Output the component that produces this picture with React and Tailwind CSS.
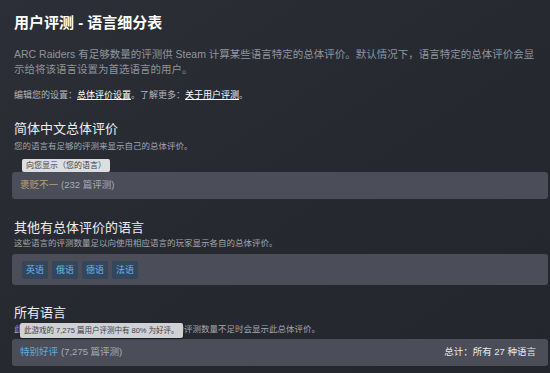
export default function App() {
  const font = { fontFamily: '"Liberation Sans", "Noto Sans CJK SC", sans-serif' };
  return (
    <div
      className="w-[550px] h-[373px] overflow-hidden bg-gradient-to-br from-[#2c2f37] via-[#262930] to-[#23262d] pl-[12px] pr-[2px] pt-[13px]"
      style={font}
    >
      <div className="pl-[2px] text-[15px] leading-[20px] font-bold text-white">用户评测 - 语言细分表</div>

      <p className="pl-[2px] mt-[14px] text-[10.5px] leading-[15px] text-[#8f959d] whitespace-nowrap">
        ARC Raiders 有足够数量的评测供 Steam 计算某些语言特定的总体评价。默认情况下，语言特定的总体评价会显
        <br />
        示给将该语言设置为首选语言的用户。
      </p>

      <div className="pl-[2px] mt-[12px] text-[9px] leading-[12px] text-[#b3b7bd] whitespace-nowrap">
        编辑您的设置：<span className="text-white underline">总体评价设置</span>。了解更多：<span className="text-white underline">关于用户评测</span>。
      </div>

      <div className="pl-[2px] mt-[19px] text-[13px] leading-[17px] text-[#eceef0]">简体中文总体评价</div>
      <div className="pl-[2px] mt-[3px] text-[8.5px] leading-[12px] text-[#a2a6ad]">
        您的语言有足够的评测来显示自己的总体评价。
      </div>

      <div className="relative mt-[20px] h-[27px] rounded-[3px] bg-[#4b4e59] flex items-center px-[8px] text-[9.5px]">
        <div className="absolute left-[10px] bottom-full h-[13px] px-[4px] rounded-[2px] bg-[#dcdee2] text-[#3b3e45] text-[8px] leading-[13px] whitespace-nowrap">
          向您显示（您的语言）
        </div>
        <span className="text-[#b9a074]">褒贬不一</span>
        <span className="ml-[3px] text-[#a9adb4]">(232 篇评测)</span>
      </div>

      <div className="pl-[2px] mt-[20px] text-[13px] leading-[17px] text-[#eceef0]">其他有总体评价的语言</div>
      <div className="pl-[2px] mt-[1px] text-[8.5px] leading-[12px] text-[#a2a6ad] whitespace-nowrap">
        这些语言的评测数量足以向使用相应语言的玩家显示各自的总体评价。
      </div>

      <div className="mt-[5px] h-[31px] rounded-[3px] bg-[#4b4e59] flex items-center gap-[4px] px-[10px]">
        {["英语", "俄语", "德语", "法语"].map((t) => (
          <span
            key={t}
            className="h-[18px] px-[4px] rounded-[2px] bg-[#34465c] text-[#66b6ea] text-[9px] leading-[18px]"
          >
            {t}
          </span>
        ))}
      </div>

      <div className="pl-[2px] mt-[19px] text-[13px] leading-[17px] text-[#eceef0]">所有语言</div>
      <div className="relative pl-[2px] mt-[2px] text-[8.5px] leading-[12px] text-[#a2a6ad] whitespace-nowrap">
        此总体评价包括所有语言的评测，在您语言的评测数量不足时会显示此总体评价。
        <div className="absolute left-[8px] top-[0px] h-[15px] px-[4px] rounded-[2px] bg-[#cfd1d5] text-[#3f424a] text-[7.5px] leading-[15px] shadow-[0_1px_2px_rgba(0,0,0,0.4)] whitespace-nowrap">
          此游戏的 7,275 篇用户评测中有 80% 为好评。
        </div>
      </div>

      <div className="mt-[4px] h-[27px] rounded-[3px] bg-[#4b4e59] flex items-center justify-between px-[8px] text-[9.5px]">
        <div>
          <span className="text-[#5ea9e0]">特别好评</span>
          <span className="ml-[3px] text-[#a9adb4]">(7,275 篇评测)</span>
        </div>
        <span className="text-[#e8eaed] pr-[4px]">总计：所有 27 种语言</span>
      </div>
    </div>
  );
}
